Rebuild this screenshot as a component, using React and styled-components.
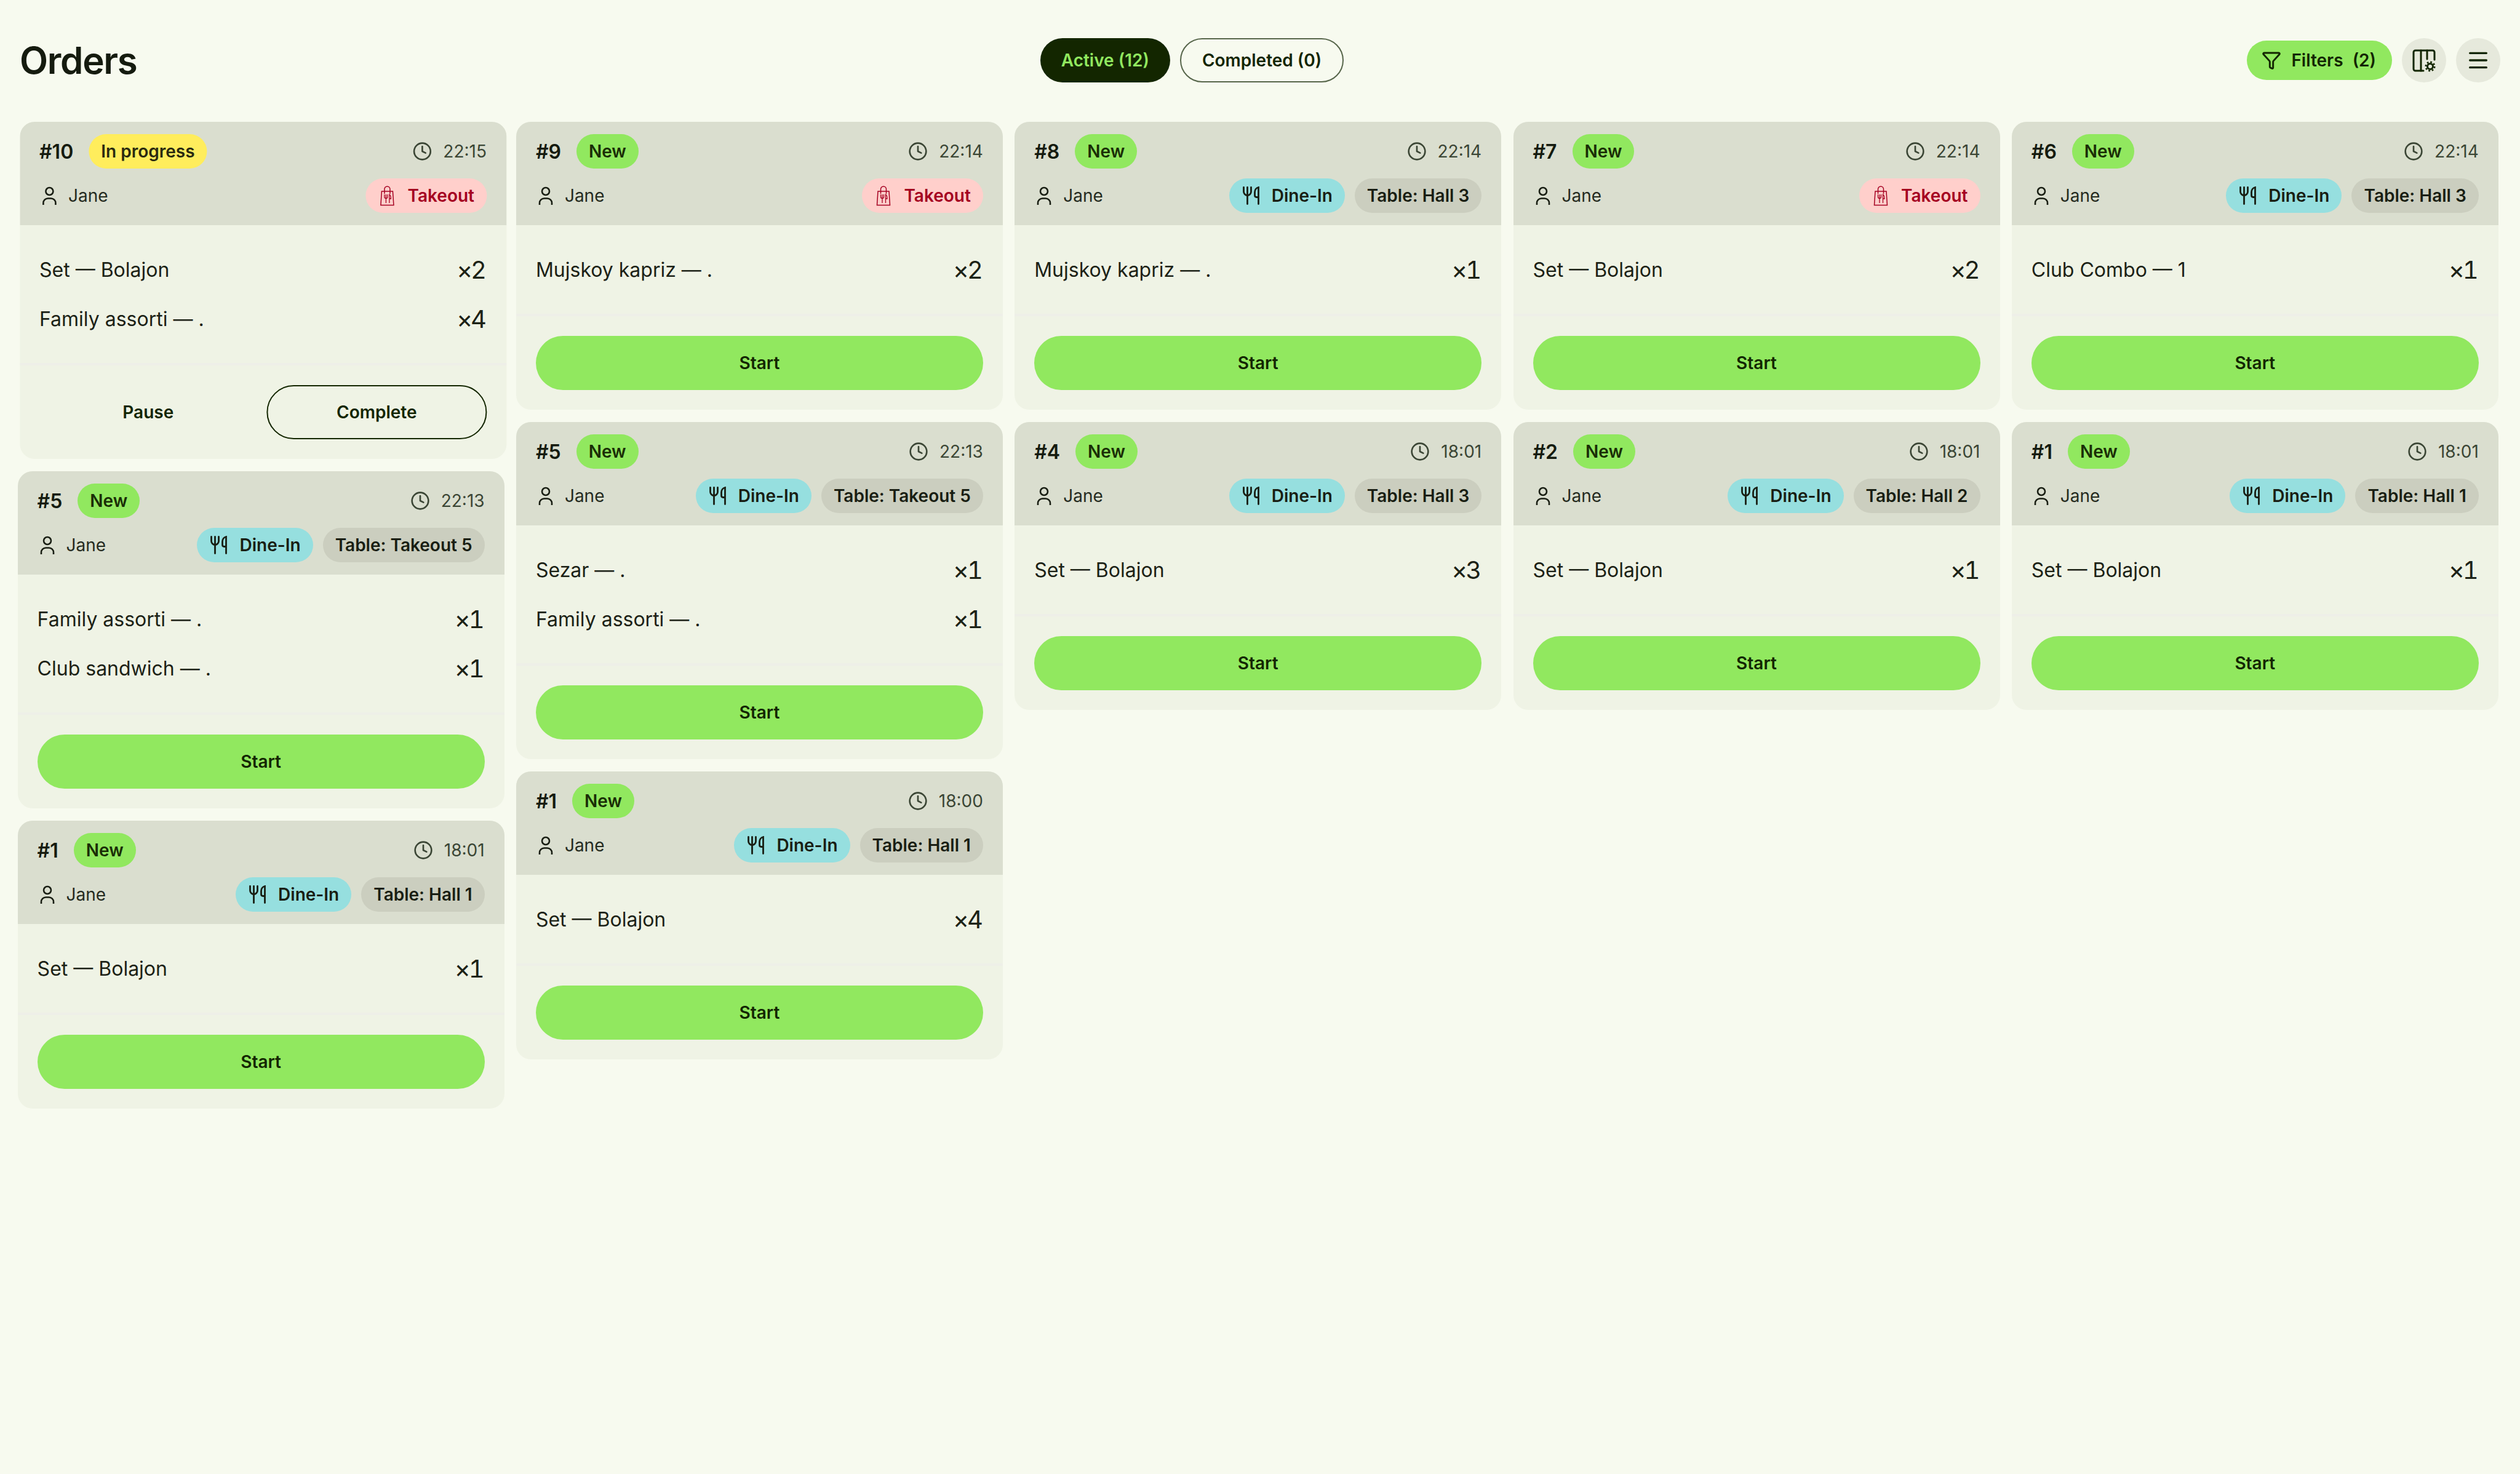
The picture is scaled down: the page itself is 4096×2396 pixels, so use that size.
import React from 'react';
import styled, { createGlobalStyle, css } from 'styled-components';
import { Clock, Funnel, Menu } from 'lucide-react';

const GlobalStyle = createGlobalStyle`
  html, body {
    margin: 0;
    padding: 0;
    background: #f7faef;
    font-family: Inter, "Liberation Sans", sans-serif;
    color: #191e13;
  }
  * { box-sizing: border-box; }
`;

const Page = styled.div`
  min-height: 2396px;
  padding: 62px 32px 0;
  background: #f7faef;
`;

const TopBar = styled.header`
  display: flex;
  align-items: center;
  justify-content: space-between;
  height: 72px;
  margin-bottom: 64px;
`;

const Title = styled.h1`
  margin: 0;
  font-size: 60px;
  font-weight: 600;
  letter-spacing: -1.3px;
  color: #151b0f;
`;

const Tabs = styled.div`
  display: flex;
  gap: 16px;
`;

const Tab = styled.button`
  height: 72px;
  padding: 0 34px;
  border-radius: 36px;
  font: 600 28px Inter, sans-serif;
  ${p => p.$active ? css`
    background: #132600;
    border: none;
    color: #91e85f;
  ` : css`
    background: transparent;
    border: 2px solid #56654a;
    color: #132600;
  `}
`;

const Tools = styled.div`
  display: flex;
  align-items: center;
  gap: 16px;
`;

const FilterButton = styled.button`
  display: flex;
  align-items: center;
  gap: 16px;
  height: 64px;
  padding: 0 26px 0 24px;
  border: none;
  border-radius: 32px;
  background: #91e85f;
  color: #132600;
  font: 600 28px Inter, sans-serif;
  word-spacing: 8px;
`;

const RoundButton = styled.button`
  display: flex;
  align-items: center;
  justify-content: center;
  width: 72px;
  height: 72px;
  padding: 0;
  border: none;
  border-radius: 50%;
  background: #e6e9dc;
  color: #132600;
`;

const Board = styled.main`
  display: grid;
  grid-template-columns: repeat(5, 791px);
  column-gap: 19.3px;
  align-items: start;
  margin-left: -3.4px;
`;

const Column = styled.div`
  display: flex;
  flex-direction: column;
  gap: 20px;
`;

const Card = styled.article`
  overflow: hidden;
  border-radius: 24px;
  background: #eff3e5;
  ${p => p.$nudged && css`
    transform: translateX(3.4px);
  `}
`;

const CardHead = styled.div`
  display: flex;
  flex-direction: column;
  gap: 16px;
  padding: 20px 32px;
  background: #dadecf;
`;

const HeadRow = styled.div`
  display: flex;
  align-items: center;
  justify-content: space-between;
  height: 56px;
`;

const Group = styled.div`
  display: flex;
  align-items: center;
  gap: ${p => p.$gap || 16}px;
`;

const OrderNo = styled.span`
  font-size: 32px;
  font-weight: 600;
  color: #151b0f;
`;

const Pill = styled.span`
  display: inline-flex;
  align-items: center;
  height: 56px;
  padding: 0 20px;
  border-radius: 28px;
  font-size: 28px;
  font-weight: 600;
  white-space: nowrap;
  color: ${p => p.$color || '#191e13'};
  background: ${p => p.$bg};
`;

const IconPill = styled(Pill)`
  gap: ${p => p.$gap}px;
  padding: 0 20px 0 ${p => p.$lead}px;
`;

const TimeLabel = styled.span`
  display: flex;
  align-items: center;
  gap: 18px;
  font-size: 28px;
  color: #3b4635;
`;

const Person = styled.span`
  display: flex;
  align-items: center;
  gap: 15px;
  font-size: 28px;
  color: #252b1f;
`;

const Items = styled.div`
  padding: 32px;
  border-bottom: 4px solid #eeefe8;
`;

const ItemRow = styled.div`
  display: flex;
  align-items: center;
  justify-content: space-between;
  height: 80px;
`;

const ItemName = styled.span`
  font-size: 32px;
  color: #1c2216;
`;

const ItemQty = styled.span`
  padding-right: 3px;
  font-size: 40px;
  letter-spacing: -3px;
  font-variant-numeric: tabular-nums;
  color: #1c2216;
`;

const Actions = styled.div`
  display: flex;
  gap: 16px;
  padding: 32px;
`;

const ActionButton = styled.button`
  flex: 1;
  height: 88px;
  border-radius: 44px;
  font: 600 28px Inter, sans-serif;
  color: #132600;
  ${p => p.$variant === 'primary' && css`
    background: #91e85f;
    border: none;
  `}
  ${p => p.$variant === 'ghost' && css`
    background: transparent;
    border: none;
  `}
  ${p => p.$variant === 'outline' && css`
    background: transparent;
    border: 2px solid #132600;
  `}
`;

const UserIcon = () => (
  <svg width="32" height="32" viewBox="0 0 32 32" fill="none" stroke="#191e13" strokeWidth="2.6">
    <circle cx="16" cy="9" r="6" />
    <path d="M6 31v-3a7.500 7.500 0 0 1 7.500-7.500h5a7.500 7.500 0 0 1 7.500 7.500v3" />
  </svg>
);

const DineIcon = () => (
  <svg width="27" height="30" viewBox="0 0 27 30" fill="none" stroke="#191e13" strokeWidth="2.8" strokeLinecap="round">
    <path d="M1.500 1.500v7a6 6 0 0 0 12 0v-7" />
    <path d="M7.500 1.500v27" />
    <path d="M25.500 28.500v-27c-3.500.8-6 4-6 8v5c0 2 1.500 3 3 3h3" />
  </svg>
);

const BagIcon = () => (
  <svg width="24" height="34" viewBox="0 0 24 34" fill="none" stroke="#a50021" strokeWidth="1.500">
    <path d="M3 10h18l1.500 22.500h-21z" />
    <path d="M7.500 14V6.500a4.500 4.500 0 0 1 9 0V14" />
    <path d="M7.500 15v4a2.500 2.500 0 0 0 5 0v-4M10 15v14" strokeWidth="1.300" />
    <path d="M15.500 29V15c1.800 1 2.500 3.500 2.500 7h-2.500" strokeWidth="1.300" />
  </svg>
);

const ColumnsIcon = () => (
  <svg width="40" height="40" viewBox="0 0 40 40" fill="none" stroke="#132600" strokeWidth="3" strokeLinecap="round">
    <path d="M37 19V7a3 3 0 0 0-3-3H6a3 3 0 0 0-3 3v27a3 3 0 0 0 3 3h13" />
    <path d="M15 4v33M25 4v14" />
    <circle cx="30" cy="30" r="4.500" strokeWidth="3" />
    <circle cx="30" cy="30" r="7.200" strokeWidth="2.600" strokeDasharray="2.800 2.850" strokeLinecap="butt" />
  </svg>
);

const STATUS = {
  new: { label: 'New', bg: '#91e85f', color: '#1a2e06' },
  progress: { label: 'In progress', bg: '#ffed5c', color: '#2a2a10' },
};

const OrderCard = ({ order }) => {
  const status = STATUS[order.status || 'new'];
  return (
    <Card $nudged={order.nudged}>
      <CardHead>
        <HeadRow>
          <Group $gap={25}>
            <OrderNo>#{order.no}</OrderNo>
            <Pill $bg={status.bg} $color={status.color}>{status.label}</Pill>
          </Group>
          <TimeLabel><Clock size={32} strokeWidth={2} />{order.time}</TimeLabel>
        </HeadRow>
        <HeadRow>
          <Person><UserIcon />Jane</Person>
          {order.table ? (
            <Group>
              <IconPill $bg="#96dfdf" $lead={22} $gap={20}><DineIcon />Dine-In</IconPill>
              <Pill $bg="#cbcebf">Table: {order.table}</Pill>
            </Group>
          ) : (
            <IconPill $bg="#ffcfcb" $color="#a50021" $lead={23} $gap={21}><BagIcon />Takeout</IconPill>
          )}
        </HeadRow>
      </CardHead>
      <Items>
        {order.items.map(([name, qty]) => (
          <ItemRow key={name}>
            <ItemName>{name}</ItemName>
            <ItemQty>×{qty}</ItemQty>
          </ItemRow>
        ))}
      </Items>
      <Actions>
        {order.status === 'progress' ? (
          <>
            <ActionButton $variant="ghost">Pause</ActionButton>
            <ActionButton $variant="outline">Complete</ActionButton>
          </>
        ) : (
          <ActionButton $variant="primary">Start</ActionButton>
        )}
      </Actions>
    </Card>
  );
};

const SET = 'Set — Bolajon';
const FAMILY = 'Family assorti — .';
const KAPRIZ = 'Mujskoy kapriz — .';

const COLUMNS = [
  [
    { no: 10, status: 'progress', nudged: true, time: '22:15', items: [[SET, 2], [FAMILY, 4]] },
    { no: 5, time: '22:13', table: 'Takeout 5', items: [[FAMILY, 1], ['Club sandwich — .', 1]] },
    { no: 1, time: '18:01', table: 'Hall 1', items: [[SET, 1]] },
  ],
  [
    { no: 9, time: '22:14', items: [[KAPRIZ, 2]] },
    { no: 5, time: '22:13', table: 'Takeout 5', items: [['Sezar — .', 1], [FAMILY, 1]] },
    { no: 1, time: '18:00', table: 'Hall 1', items: [[SET, 4]] },
  ],
  [
    { no: 8, time: '22:14', table: 'Hall 3', items: [[KAPRIZ, 1]] },
    { no: 4, time: '18:01', table: 'Hall 3', items: [[SET, 3]] },
  ],
  [
    { no: 7, time: '22:14', items: [[SET, 2]] },
    { no: 2, time: '18:01', table: 'Hall 2', items: [[SET, 1]] },
  ],
  [
    { no: 6, time: '22:14', table: 'Hall 3', items: [['Club Combo — 1', 1]] },
    { no: 1, time: '18:01', table: 'Hall 1', items: [[SET, 1]] },
  ],
];

export default function App() {
  return (
    <Page>
      <GlobalStyle />
      <TopBar>
        <Title>Orders</Title>
        <Tabs>
          <Tab $active>Active (12)</Tab>
          <Tab>Completed (0)</Tab>
        </Tabs>
        <Tools>
          <FilterButton><Funnel size={32} strokeWidth={2.2} />Filters (2)</FilterButton>
          <RoundButton><ColumnsIcon /></RoundButton>
          <RoundButton><Menu size={40} strokeWidth={2} /></RoundButton>
        </Tools>
      </TopBar>
      <Board>
        {COLUMNS.map((orders, i) => (
          <Column key={i}>
            {orders.map((order, j) => <OrderCard key={j} order={order} />)}
          </Column>
        ))}
      </Board>
    </Page>
  );
}
